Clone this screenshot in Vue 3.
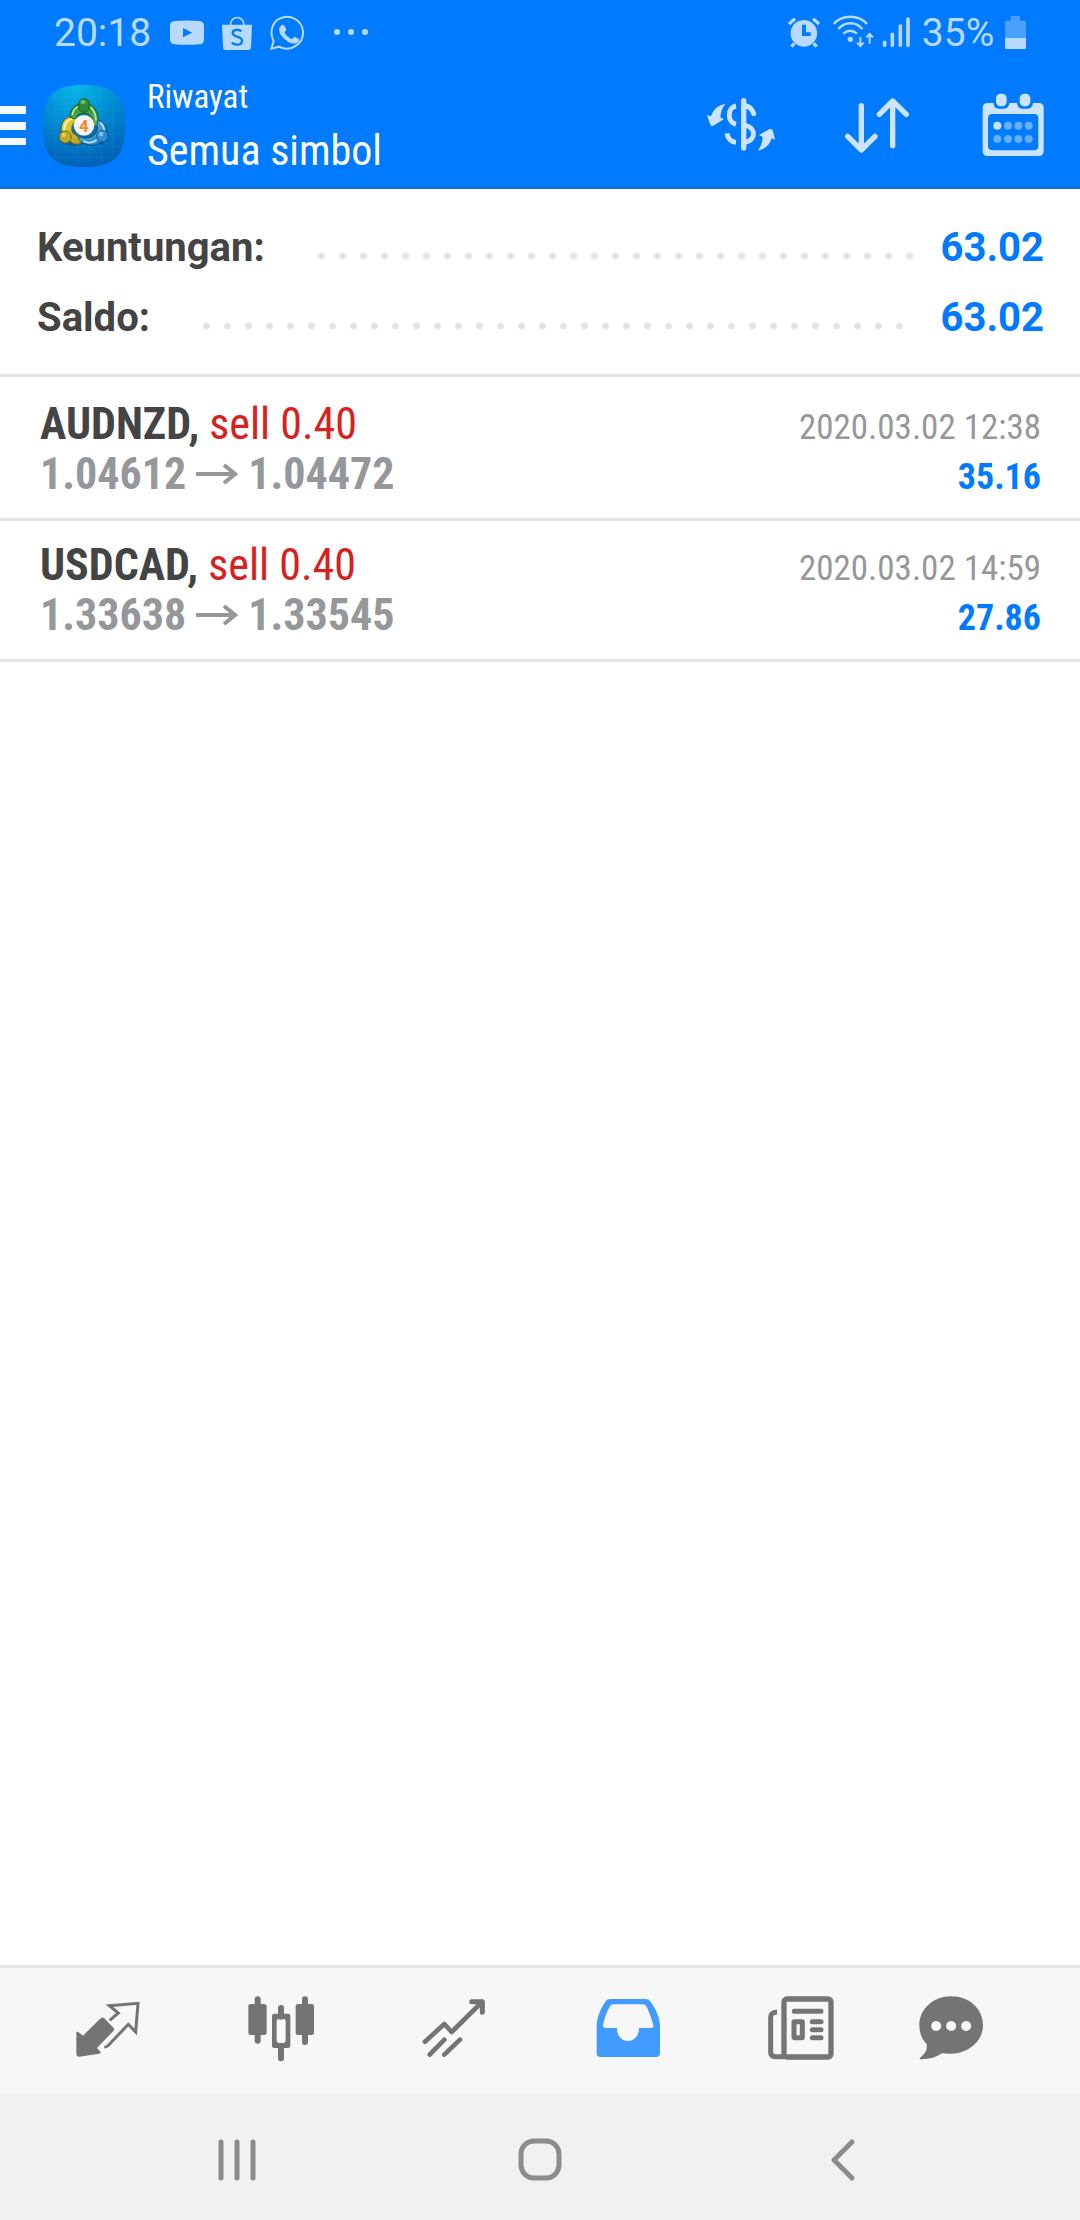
<script setup>
const summary = [
  { id: 'profit', label: 'Keuntungan:', value: '63.02' },
  { id: 'balance', label: 'Saldo:', value: '63.02' },
]
const deals = [
  { symbol: 'AUDNZD', side: 'sell 0.40', open: '1.04612', close: '1.04472', time: '2020.03.02 12:38', profit: '35.16' },
  { symbol: 'USDCAD', side: 'sell 0.40', open: '1.33638', close: '1.33545', time: '2020.03.02 14:59', profit: '27.86' },
]
</script>

<template>
  <div class="screen">
    <header class="top">
      <div class="status">
        <span class="clock">20:18</span>
        <svg class="status-left" viewBox="504 39 612 120" aria-hidden="true">
          <path fill-rule="evenodd" d="M524 60Q561 57 598 60Q611 61 612 73V117Q611 129 598 130Q561 133 524 130Q511 129 510 117V73Q511 61 524 60ZM549 81V109L576 95Z" />
          <path d="M666 71H756L753 140Q752 147 745 147H676Q669 147 669 140Z" />
          <path class="line" stroke-width="5" d="M691 72C692 42 731 42 732 72" />
          <path class="cut" d="M724 91C716 84 698 84 698 96C698 110 726 104 726 119C726 134 705 133 695 125" />
          <path class="line" stroke-width="6" d="M814 143L821 120C808 97 815 64 840 52C870 38 906 58 909 91C911 127 873 156 837 137Z" />
          <path d="M845 72Q850 70 853 74L859 85Q859 89 853 94C858 104 866 111 876 115Q882 107 886 108L897 115Q899 118 895 122C887 131 872 129 856 116C842 104 835 91 838 80Z" />
          <circle cx="1011" cy="93" r="9" /><circle cx="1053" cy="93" r="9" /><circle cx="1095" cy="93" r="9" />
        </svg>
        <span class="grow"></span>
        <svg class="status-right" viewBox="318 39 378 120" aria-hidden="true">
          <path fill-rule="evenodd" d="M372 57A40 40 0 1 1 371 57ZM366 71V105H392V94H378V71Z" />
          <path class="line" stroke-width="10" d="M327 69L345 53M399 53L417 69M343 127L334 137M401 127L410 137" />
          <path class="line" stroke-width="7" d="M461 69C486 40 536 40 561 69M475 84C494 61 528 61 547 84M490 98Q510 80 531 98" />
          <circle cx="511" cy="115" r="8" />
          <path class="line" stroke-width="6" d="M541 108V133M531 125L541 135L551 125M569 128V101M559 109L569 99L579 109" />
          <path class="line round" stroke-width="11" d="M614 124V133M637 100V133M661 75V133M684 54V133" />
        </svg>
        <span class="battery-text">35%</span>
        <svg class="battery" viewBox="972 39 72 120" aria-hidden="true">
          <path opacity=".4" d="M992 45H1020V59H1034Q1038 59 1038 63V111H975V63Q975 59 979 59H992Z" />
          <path d="M975 111H1038V140Q1038 144 1034 144H979Q975 144 975 140Z" />
        </svg>
      </div>

      <div class="appbar">
        <button class="menu" aria-label="Menu">
          <svg viewBox="0 0 26 40"><path d="M0 0H26V8H0ZM0 16H26V24H0ZM0 32H26V39H0Z" /></svg>
        </button>
        <svg class="logo" viewBox="0 0 246 246" aria-hidden="true">
          <defs>
            <radialGradient id="sky" cx=".4" cy="0" r="1"><stop offset="0" stop-color="#07b8ea" /><stop offset=".5" stop-color="#008bd2" /><stop offset="1" stop-color="#0060b5" /></radialGradient>
            <linearGradient id="green" x2="0" y2="1"><stop offset="0" stop-color="#258f2d" /><stop offset="1" stop-color="#67b957" /></linearGradient>
            <linearGradient id="gold" x2="1" y2="1"><stop offset="0" stop-color="#e8dc50" /><stop offset="1" stop-color="#b19b16" /></linearGradient>
            <linearGradient id="blue" x2="1" y2="1"><stop offset="0" stop-color="#6fc4f0" /><stop offset="1" stop-color="#1679bd" /></linearGradient>
          </defs>
          <path fill="url(#sky)" d="M123 0C215 0 246 31 246 123S215 246 123 246S0 215 0 123S31 0 123 0Z" />
          <path stroke="#5cc3f0" stroke-opacity=".16" stroke-width="2" d="M34 18V228M69 5V241M104 1V245M139 1V245M174 3V243M209 16V230M16 36H230M4 73H242M1 110H245M1 147H245M4 184H242M14 218H232" />
          <path fill="#123f5a" opacity=".35" d="M79 91C81 60 158 60 165 91L164 105C190 112 196 132 196 150C198 165 180 182 160 180Q140 188 122 176Q98 190 75 180C50 182 43 156 54 140C50 110 65 100 82 96Z" />
          <path fill="url(#gold)" stroke="#756a10" stroke-width="3" d="M93 96C68 91 50 115 56 142L73 156Q87 184 112 176L118 162L90 145C80 129 91 110 103 106Z" />
          <path fill="none" stroke="#fff29a" stroke-width="5" d="M64 137C63 115 74 102 90 102" />
          <path fill="url(#green)" stroke="#215f24" stroke-width="3" d="M81 96C82 68 100 54 123 53C151 54 169 80 166 121Q162 128 150 117C152 98 139 84 123 85C106 84 99 94 100 101Q90 103 81 96Z" />
          <path fill="none" stroke="#b6e6ad" stroke-width="5" d="M88 90C90 76 97 68 106 65M142 66C155 77 159 93 159 107" />
          <path fill="url(#blue)" stroke="#16578c" stroke-width="3" d="M164 105C185 108 195 130 189 154C176 175 157 184 137 179C117 176 108 166 105 154Q127 164 143 157C158 150 167 134 162 119Z" />
          <path fill="none" stroke="#bfe9ff" stroke-width="5" d="M171 113C182 122 184 130 183 139M121 169Q142 179 161 165" />
          <rect x="107" y="41" width="32" height="41" rx="16" fill="#2d8b36" stroke="#1d6524" stroke-width="3" />
          <ellipse cx="120" cy="51" rx="8" ry="6" fill="#a5db9d" opacity=".6" />
          <circle cx="67" cy="156" r="18" fill="#bfa928" stroke="#786c12" stroke-width="3" />
          <circle cx="62" cy="150" r="7" fill="#f3e879" opacity=".6" />
          <circle cx="178" cy="153" r="17" fill="#2c93cf" stroke="#145d97" stroke-width="3" />
          <circle cx="174" cy="147" r="7" fill="#a5dfff" opacity=".6" />
          <circle cx="123" cy="121" r="31" fill="#f3f3f3" />
          <text x="122" y="140" text-anchor="middle" class="four">4</text>
        </svg>
        <div class="titles">
          <span class="sub">Riwayat</span>
          <h1>Semua simbol</h1>
        </div>
        <button class="action" aria-label="Simbol">
          <svg viewBox="72 270 216 216">
            <path d="M78 345L90 349C96 329 111 315 133 312C123 323 119 337 118 352L128 358L96 378Q90 379 88 374Z" />
            <path d="M282 419L272 415C266 435 252 449 230 452C240 441 244 427 245 411L234 405L266 387Q272 386 275 391Z" />
            <path class="line" stroke-width="15" d="M165 318C138 323 138 367 165 373M138 400C140 416 151 426 165 427" />
            <path class="line round" stroke-width="16" d="M188 302V444" />
            <path class="line round" stroke-width="15" d="M196 318Q211 321 218 341" />
            <path class="line" stroke-width="15" d="M193 376C225 382 226 421 193 427" />
          </svg>
        </button>
        <button class="action" aria-label="Urutkan">
          <svg viewBox="480 270 216 216"><path class="line round" stroke-width="16" d="M541 317V448M500 409L541 450L582 409M635 437V304M595 343L635 303L676 343" /></svg>
        </button>
        <button class="action" aria-label="Periode">
          <svg viewBox="889 270 216 216">
            <path fill-rule="evenodd" d="M921 309H938Q940 326 954 326H970Q984 326 986 309H1009Q1011 326 1025 326H1041Q1055 326 1057 309H1074Q1089 309 1089 324V453Q1089 468 1074 468H921Q906 468 906 453V324Q906 309 921 309ZM935 342Q922 342 922 355V438Q922 451 935 451H1060Q1073 451 1073 438V355Q1073 342 1060 342Z" />
            <rect x="946" y="281" width="32" height="38" rx="14" /><rect x="1017" y="281" width="32" height="38" rx="14" />
            <circle cx="950" cy="377" r="12" />
            <g opacity=".5"><circle cx="982" cy="377" r="12" /><circle cx="1013" cy="377" r="12" /><circle cx="1044" cy="377" r="12" /><circle cx="950" cy="417" r="12" /><circle cx="982" cy="417" r="12" /><circle cx="1013" cy="417" r="12" /><circle cx="1044" cy="417" r="12" /></g>
          </svg>
        </button>
      </div>
    </header>

    <main>
      <section class="summary">
        <div v-for="s in summary" :key="s.id" class="sum-row">
          <span>{{ s.label }}</span>
          <span class="leader"></span>
          <span class="amount">{{ s.value }}</span>
        </div>
      </section>
      <ul class="deals">
        <li v-for="d in deals" :key="d.symbol">
          <div class="line-row">
            <span class="deal"><b>{{ d.symbol }},</b> <span class="side">{{ d.side }}</span></span>
            <time>{{ d.time }}</time>
          </div>
          <div class="line-row">
            <span class="prices">
              <span>{{ d.open }}</span>
              <svg class="arrow" viewBox="0 0 42 22" aria-label="ke"><path d="M0 11H38M28 2L39 11L28 20" /></svg>
              <span>{{ d.close }}</span>
            </span>
            <span class="profit">{{ d.profit }}</span>
          </div>
        </li>
      </ul>
    </main>

    <nav class="tabs">
      <button aria-label="Kuotasi">
        <svg viewBox="95 135 216 216">
          <path d="M184 203Q188 201 192 205L220 234Q223 238 220 242L170 294L181 306Q182 310 177 311L117 320Q108 320 108 311V247Q111 243 115 247L128 257L178 208Z" />
          <path class="line" stroke-width="9" d="M208 211L234 189L207 167L293 160L286 246L264 223L202 288Q199 291 192 291" />
        </svg>
      </button>
      <button aria-label="Grafik">
        <svg viewBox="612 135 216 216">
          <path class="line round" stroke-width="18" d="M650 148V272M792 148V276M720 174V200M720 290V325" />
          <rect x="622" y="162" width="55" height="93" rx="7" /><rect x="764" y="162" width="55" height="93" rx="7" />
          <path fill-rule="evenodd" d="M700 191H741Q748 191 748 198V287Q748 294 741 294H700Q693 294 693 287V198Q693 191 700 191ZM715 206Q707 206 707 214V271Q707 279 715 279H726Q734 279 734 271V214Q734 206 726 206Z" />
        </svg>
      </button>
      <button aria-label="Perdagangan">
        <svg viewBox="1132 135 216 216">
          <path class="line round" stroke-width="14" d="M1153 275L1211 222L1233 246L1324 156M1167 314L1211 269M1211 314L1258 269" />
          <path class="line round" stroke-width="15" d="M1293 155H1325V187" />
        </svg>
      </button>
      <button class="active" aria-label="Riwayat">
        <svg viewBox="93 135 216 216">
          <path fill-rule="evenodd" d="M148 147H255Q264 147 269 155C286 179 296 202 297 227V309Q297 321 285 321H119Q107 321 107 309V227C107 202 119 176 134 154Q139 147 148 147ZM158 163Q150 163 146 170C136 188 130 206 126 226Q126 234 133 234H168C167 286 234 286 234 234H271Q278 233 277 226C272 205 265 188 257 170Q252 163 244 163Z" />
        </svg>
      </button>
      <button aria-label="Berita">
        <svg viewBox="617 135 216 216">
          <rect class="line" x="674" y="147" width="141" height="174" rx="9" stroke-width="16" />
          <path class="line" stroke-width="15" d="M653 187Q634 186 634 202V307Q634 320 648 320H674" />
          <path class="line round" stroke-width="15" d="M705 184H785M759 215H785M759 239H785M759 263H785" />
          <rect class="line" x="704" y="215" width="25" height="48" rx="1" stroke-width="15" />
        </svg>
      </button>
      <button aria-label="Pesan">
        <svg viewBox="1065 135 216 216">
          <path fill-rule="evenodd" d="M1173 139C1229 139 1269 177 1269 226C1269 278 1217 320 1146 310C1128 322 1106 329 1082 328Q1077 327 1080 323C1098 308 1102 299 1100 282C1085 267 1078 249 1078 226C1078 177 1120 139 1173 139ZM1128 213A15 15 0 1 0 1129 213ZM1173 213A15 15 0 1 0 1174 213ZM1218 213A15 15 0 1 0 1219 213Z" />
        </svg>
      </button>
    </nav>
    <nav class="system">
      <button aria-label="Terbaru"><svg viewBox="0 0 44 44"><path stroke-width="5" d="M6 4V40M22 4V40M38 4V40" /></svg></button>
      <button aria-label="Beranda"><svg viewBox="0 0 44 44"><rect x="3" y="3" width="38" height="37" rx="13" stroke-width="5" /></svg></button>
      <button aria-label="Kembali"><svg viewBox="0 0 44 44"><path stroke-width="5" d="M31 4L13 22L31 40" /></svg></button>
    </nav>
  </div>
</template>

<style>
body { margin: 0; }
</style>

<style scoped>
.screen {
  min-height: 100vh;
  display: flex;
  flex-direction: column;
  background: #fff;
  font-family: "Roboto Condensed", Roboto, sans-serif;
  color: #444;
}
button { border: 0; padding: 0; background: none; display: flex; align-items: center; justify-content: center; }
svg { display: block; flex: none; }
.line { fill: none; stroke: currentColor; }
.round { stroke-linecap: round; stroke-linejoin: round; }
.top { background: #007aff; color: #fff; border-bottom: 2px solid #1a6bd0; }
.status {
  height: 67px;
  display: flex;
  align-items: center;
  padding: 0 52px 0 54px;
  color: #b8daff;
  font: 39px/67px Roboto, sans-serif;
}
.status svg { fill: currentColor; height: 40px; }
.clock { width: 114px; }
.status-left { width: 204px; }
.status-left .line, .status-right .line { fill: none; }
.status-left .cut { fill: none; stroke: #007aff; stroke-width: 7; }
.grow { flex: 1; }
.status-right { width: 126px; }
.battery-text { width: 92px; text-align: center; }
.battery { width: 24px; }
.appbar { height: 118px; display: flex; align-items: center; padding: 0 31px 2px 0; }
.menu svg { width: 26px; height: 40px; fill: #f2f9ff; }
.logo { width: 82px; height: 82px; margin: 0 22px 0 17px; }
.four { font: bold 50px Roboto, sans-serif; fill: #f08a24; }
.titles { flex: 1; align-self: flex-start; padding-top: 8px; }
.sub { display: block; font-size: 33px; line-height: 44px; }
h1 { margin: 0; font-weight: 400; font-size: 42px; line-height: 64px; }
.action { width: 72px; margin-left: 64px; color: #cce4ff; }
.action svg { width: 72px; height: 72px; fill: currentColor; }
.action .line, .tabs .line { fill: none; }
main { flex: 1; }
.summary { padding: 24px 36px 21px 37px; border-bottom: 3px solid #e4e4e4; }
.sum-row { display: flex; align-items: center; height: 70px; font: bold 40px/70px Roboto, sans-serif; }
.leader {
  flex: 1;
  height: 8px;
  margin: 16px 26px 0 46px;
  background: radial-gradient(circle, #e4e4e4 3px, transparent 4px) 0 0 / 21px 8px repeat-x;
}
.amount { color: #007aff; }
.deals { list-style: none; margin: 0; padding: 3px 0 0; }
.deals li { padding: 19px 39px 19px 40px; border-bottom: 3px solid #e4e4e4; }
.line-row { display: flex; justify-content: space-between; align-items: baseline; height: 50px; line-height: 50px; }
.deal { font-size: 44px; }
.side { color: #d92020; }
.prices { display: flex; align-items: baseline; font-size: 44px; font-weight: bold; color: #96979b; }
.arrow { width: 42px; height: 22px; margin: 0 10px; align-self: center; fill: none; stroke: currentColor; stroke-width: 4; }
time { font-size: 35px; color: #96979b; }
.profit { font-size: 36px; font-weight: bold; color: #007aff; }
.tabs {
  height: 126px;
  display: grid;
  grid-template-columns: repeat(5, 1fr) 127px;
  padding: 0 65px 0 21px;
  border-top: 3px solid #e4e4e4;
  background: #f7f7f7;
}
.tabs button { color: #747474; }
.tabs .active { color: #429bff; }
.tabs svg { width: 72px; height: 72px; fill: currentColor; }
.system { height: 126px; display: flex; justify-content: space-around; padding: 0 86px; background: #f1f1f1; }
.system svg { width: 44px; height: 44px; margin-top: 6px; fill: none; stroke: #8c8c8c; stroke-linecap: round; stroke-linejoin: round; }
</style>
